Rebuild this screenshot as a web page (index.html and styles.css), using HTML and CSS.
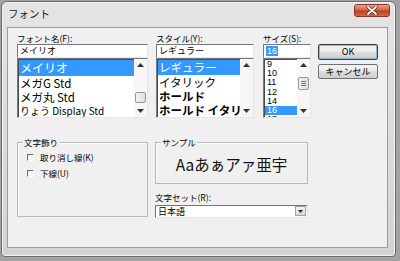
FILE: index.html
```html
<!DOCTYPE html>
<html lang="ja">
<head>
    <meta charset="UTF-8">
    <meta name="viewport" content="width=device-width, initial-scale=1.0">
    <title>フォント</title>
    <link rel="stylesheet" href="styles.css">
</head>
<body>
    <div class="window">
        <!-- Title bar -->
        <div class="titlebar">
            <span class="title">フォント</span>
            <button class="close" aria-label="閉じる">
                <svg width="12" height="9" viewBox="0 0 12 9">
                    <path d="M2 1 L10 8 M10 1 L2 8" stroke="#5a2418" stroke-width="3.2" stroke-linecap="round"/>
                    <path d="M2 1 L10 8 M10 1 L2 8" stroke="#ffffff" stroke-width="1.8" stroke-linecap="round"/>
                </svg>
            </button>
        </div>

        <div class="client">
            <div class="top">
                <!-- Font name -->
                <div class="col col-font">
                    <div class="label">フォント名(F):</div>
                    <div class="field">メイリオ</div>
                    <div class="list">
                        <div class="items font-items">
                            <div class="row selected">メイリオ</div>
                            <div class="row">メガG Std</div>
                            <div class="row">メガ丸 Std</div>
                            <div class="row small">りょう Display Std</div>
                        </div>
                        <div class="scroll">
                            <svg class="arr up" width="7" height="4" viewBox="0 0 7 4"><path d="M0 4 L3.5 0 L7 4 Z" fill="#333"/></svg>
                            <span class="thumb font-thumb"></span>
                            <svg class="arr down" width="7" height="4" viewBox="0 0 7 4"><path d="M0 0 L7 0 L3.5 4 Z" fill="#333"/></svg>
                        </div>
                    </div>
                </div>

                <!-- Style -->
                <div class="col col-style">
                    <div class="label">スタイル(Y):</div>
                    <div class="field">レギュラー</div>
                    <div class="list">
                        <div class="items style-items">
                            <div class="row selected">レギュラー</div>
                            <div class="row">イタリック</div>
                            <div class="row bold">ホールド</div>
                            <div class="row bold">ホールド イタリック</div>
                        </div>
                        <div class="scroll">
                            <svg class="arr up" width="7" height="4" viewBox="0 0 7 4"><path d="M0 4 L3.5 0 L7 4 Z" fill="#333"/></svg>
                            <svg class="arr down" width="7" height="4" viewBox="0 0 7 4"><path d="M0 0 L7 0 L3.5 4 Z" fill="#333"/></svg>
                        </div>
                    </div>
                </div>

                <!-- Size -->
                <div class="col col-size">
                    <div class="label">サイズ(S):</div>
                    <div class="field"><span class="sel">16</span></div>
                    <div class="list">
                        <div class="items size-items">
                            <div class="row">9</div>
                            <div class="row">10</div>
                            <div class="row">11</div>
                            <div class="row">12</div>
                            <div class="row">14</div>
                            <div class="row selected">16</div>
                            <div class="row">18</div>
                        </div>
                        <div class="scroll">
                            <svg class="arr up" width="7" height="4" viewBox="0 0 7 4"><path d="M0 4 L3.5 0 L7 4 Z" fill="#333"/></svg>
                            <span class="thumb size-thumb"><i></i><i></i><i></i></span>
                            <svg class="arr down" width="7" height="4" viewBox="0 0 7 4"><path d="M0 0 L7 0 L3.5 4 Z" fill="#333"/></svg>
                        </div>
                    </div>
                </div>

                <!-- Buttons -->
                <div class="col col-buttons">
                    <button class="btn default">OK</button>
                    <button class="btn">キャンセル</button>
                </div>
            </div>

            <div class="bottom">
                <div class="group effects">
                    <span class="group-title">文字飾り</span>
                    <label class="check"><span class="box"></span>取り消し線(K)</label>
                    <label class="check"><span class="box"></span>下線(U)</label>
                </div>

                <div class="col-right">
                    <div class="group sample">
                        <span class="group-title">サンプル</span>
                        <div class="sample-text">Aaあぁアァ亜宇</div>
                    </div>
                    <div class="label charset-label">文字セット(R):</div>
                    <div class="field select">
                        <span>日本語</span>
                        <span class="drop">
                            <svg width="5" height="3" viewBox="0 0 5 3"><path d="M0 0 L5 0 L2.5 3 Z" fill="#222"/></svg>
                        </span>
                    </div>
                </div>
            </div>
        </div>
    </div>
</body>
</html>
```

FILE: styles.css
```css
body {
    margin: 0;
    background: #a3a3a3;
    font-family: "Noto Sans CJK JP", "Noto Sans", sans-serif;
    font-size: 9px;
    color: #000;
}

/* Window frame */
.window {
    width: 395px;
    height: 256px;
    margin: 1px 0 0 1px;
    box-sizing: border-box;
    border: 1px solid #6c6c6c;
    border-radius: 6px 6px 4px 4px;
    background: linear-gradient(#e4e4e4, #d3d3d3);
    box-shadow: inset 0 0 0 1px #f3f3f3;
    padding: 0 5px;
}

.titlebar {
    height: 25px;
    display: flex;
    justify-content: space-between;
    align-items: flex-start;
}

.title {
    font-size: 10.5px;
    line-height: 12px;
    margin: 6px 0 0 1px;
    color: #1a1a1a;
}

.close {
    width: 36px;
    height: 13px;
    margin-top: 2px;
    padding: 0;
    border: 1px solid #8a3424;
    border-radius: 3px;
    background: linear-gradient(#e9a18a, #d2654a 45%, #c2401f 55%, #cf6a4d);
    display: flex;
    align-items: center;
    justify-content: center;
}

.client {
    width: 381px;
    height: 221px;
    box-sizing: border-box;
    border: 1px solid #9c9c9c;
    background: #f0f0f0;
    padding: 5px 0 0 9px;
}

/* Top row */
.top {
    display: flex;
}

.col-font { width: 131px; margin-right: 8px; }
.col-style { width: 98px; margin-right: 9px; }
.col-size { width: 48px; margin-right: 7px; }
.col-buttons {
    width: 60px;
    padding-top: 11px;
    display: flex;
    flex-direction: column;
    gap: 4px;
}

.label {
    height: 11px;
    line-height: 11px;
    font-size: 8.5px;
    white-space: nowrap;
}

.field {
    height: 14px;
    box-sizing: border-box;
    border: 1px solid;
    border-color: #767676 #e6e6e6 #e6e6e6 #767676;
    background: #fff;
    line-height: 12px;
    padding-left: 2px;
    font-size: 9px;
    white-space: nowrap;
}

.sel {
    background: #3399ff;
    color: #fff;
    padding: 0 1px;
    font-family: "Liberation Sans", sans-serif;
}

.list {
    height: 60px;
    box-sizing: border-box;
    border: 1px solid;
    border-color: #7a7a7a #e6e6e6 #e6e6e6 #7a7a7a;
    box-shadow: inset 1px 1px #4a4a4a;
    background: #fff;
    display: flex;
}

.items {
    flex: 1;
    min-width: 0;
    overflow: hidden;
    padding: 1px 0 0 1px;
}

.row {
    white-space: nowrap;
}

.row.selected {
    background: #3399ff;
    color: #fff;
}

.font-items .row {
    height: 14px;
    line-height: 14px;
    font-size: 11.5px;
    padding-left: 1px;
}

.font-items .row.selected {
    height: 16px;
    line-height: 16px;
    font-size: 12px;
}

.font-items .row.small {
    font-size: 10px;
}

.style-items .row {
    height: 14px;
    line-height: 14px;
    font-size: 11.5px;
    padding-left: 1px;
}

.style-items .row.selected {
    height: 15px;
    line-height: 15px;
}

.style-items .row.bold {
    font-weight: bold;
}

.size-items .row {
    height: 9.2px;
    line-height: 9px;
    font-family: "Liberation Sans", sans-serif;
    font-size: 9px;
    padding-left: 2px;
}

/* Scrollbars */
.scroll {
    width: 13px;
    flex: none;
    background: #f6f6f6;
    display: flex;
    flex-direction: column;
    align-items: center;
}

.arr {
    display: block;
    flex: none;
}

.arr.up {
    margin-top: 4px;
}

.arr.down {
    margin-top: auto;
    margin-bottom: 4px;
}

.thumb {
    width: 11px;
    box-sizing: border-box;
    border: 1px solid #979797;
    border-radius: 2px;
    background: linear-gradient(90deg, #f4f4f4, #dedede);
}

.font-thumb {
    height: 11px;
    margin-top: 25px;
}

.size-thumb {
    height: 13px;
    margin-top: 10px;
    display: flex;
    flex-direction: column;
    align-items: center;
    justify-content: center;
    gap: 1px;
}

.size-thumb i {
    width: 5px;
    height: 1px;
    background: #777;
}

/* Buttons */
.btn {
    height: 15px;
    padding: 0;
    box-sizing: border-box;
    border: 1px solid #707070;
    border-radius: 2px;
    background: linear-gradient(#f3f3f3, #ebebeb 50%, #dddddd 50%, #cfcfcf);
    font-family: "Noto Sans CJK JP", "Noto Sans", sans-serif;
    font-size: 9px;
    line-height: 12px;
    color: #000;
}

.btn.default {
    height: 16px;
    border-color: #3c3c3c;
    box-shadow: inset 0 0 0 1px #9ab6cf;
}

/* Bottom row */
.bottom {
    display: flex;
    margin-top: 24px;
}

.group {
    position: relative;
    box-sizing: border-box;
    border: 1px solid #b9b9b9;
    box-shadow: inset 1px 1px #fbfbfb;
}

.group-title {
    position: absolute;
    top: -6px;
    left: 5px;
    padding: 0 1px;
    background: #f0f0f0;
    line-height: 10px;
    font-size: 8.5px;
}

.effects {
    width: 131px;
    height: 75px;
    padding: 9px 0 0 9px;
    display: flex;
    flex-direction: column;
    gap: 6px;
}

.check {
    display: flex;
    align-items: center;
    height: 10px;
    line-height: 10px;
    font-size: 8.5px;
}

.box {
    width: 7px;
    height: 7px;
    box-sizing: border-box;
    border: 1px solid;
    border-color: #6f6f6f #ffffff #ffffff #6f6f6f;
    background: #f4f4f4;
    margin-right: 6px;
}

.col-right {
    width: 153px;
    margin-left: 7px;
}

.sample {
    height: 42px;
    display: flex;
    align-items: center;
    justify-content: center;
}

.sample-text {
    font-size: 15.5px;
    line-height: 18px;
    margin-top: 2px;
    color: #111;
}

.charset-label {
    margin-top: 8px;
}

.select {
    height: 13px;
    margin-top: 2px;
    display: flex;
    justify-content: space-between;
    line-height: 11px;
}

.drop {
    width: 11px;
    height: 10px;
    margin: 0 1px 0 0;
    box-sizing: border-box;
    border: 1px solid #a0a0a0;
    background: linear-gradient(#f4f4f4, #d9d9d9);
    display: flex;
    align-items: center;
    justify-content: center;
}
```
